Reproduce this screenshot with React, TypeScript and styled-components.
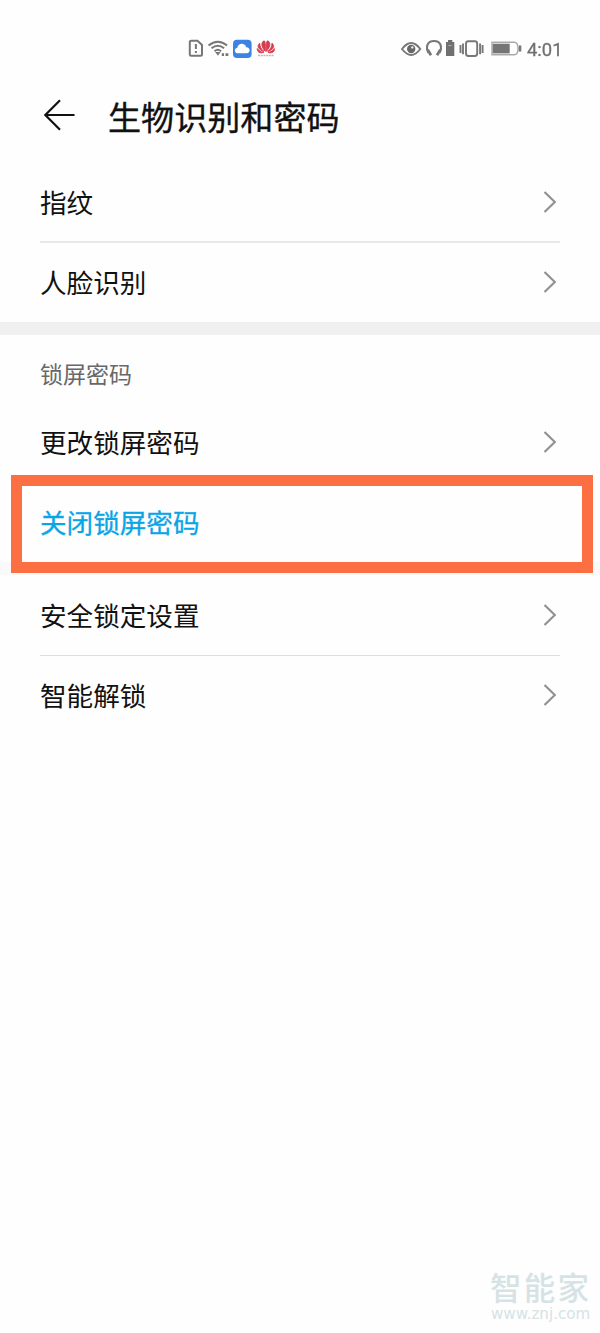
import React from "react";
import styled, { createGlobalStyle } from "styled-components";

const Global = createGlobalStyle`
  body { margin: 0; background: #fefefe; }
  * { box-sizing: border-box; }
`;

const Screen = styled.main`
  position: relative;
  display: flex;
  flex-direction: column;
  width: 600px;
  height: 1333px;
  overflow: hidden;
  background: #fefefe;
  color: #111;
  font-family: "Noto Sans CJK SC", sans-serif;
`;

const StatusBar = styled.div`
  display: flex;
  justify-content: space-between;
  align-items: center;
  height: 30px;
  margin-top: 34px;
  padding: 0 38px 0 187px;
  filter: blur(0.6px);
`;

const StatusGroup = styled.div`
  display: flex;
  align-items: center;
  height: 30px;
`;

const Clock = styled.span`
  width: 35px;
  margin-left: 4px;
  padding-top: 1px;
  font: 18.4px/30px Roboto, sans-serif;
  color: #707070;
  -webkit-text-stroke: 0.3px #707070;
  white-space: nowrap;
`;

const Header = styled.header`
  display: flex;
  align-items: center;
  height: 98px;
  padding: 0 0 0 43px;
`;

const BackIcon = styled.svg`
  width: 32px;
  height: 32px;
  margin-top: 4px;
`;

const Title = styled.h1`
  margin: 5px 0 0 33px;
  font-size: 33.1px;
  line-height: 48px;
  font-weight: 400;
  -webkit-text-stroke: 0.35px #111;
  white-space: nowrap;
`;

const Row = styled.div<{ $accent?: boolean }>`
  display: flex;
  align-items: center;
  justify-content: space-between;
  height: 80px;
  margin: 0 40px;
  padding-right: 2px;
  font-size: 26.6px;
  line-height: 40px;
  font-weight: 400;
  color: ${(p) => (p.$accent ? "#0ba5e6" : "#111")};
  -webkit-text-stroke: ${(p) => (p.$accent ? "0.3px #0ba5e6" : "0")};
`;

const RowLabel = styled.span`
  margin-top: -1px;
`;

const Divider = styled.div<{ $thin?: boolean }>`
  height: ${(p) => (p.$thin ? 1 : 2)}px;
  margin: ${(p) => (p.$thin ? "0 40px -1px" : "-1px 40px")};
  background: ${(p) => (p.$thin ? "#dedede" : "#e8e8e8")};
`;

const Band = styled.div<{ $faint?: boolean }>`
  height: 13px;
  background: ${(p) => (p.$faint ? "#f9f9f9" : "#f0f0f0")};
`;

const SectionLabel = styled.h2`
  height: 67px;
  margin: 0;
  padding: 20px 40px 0;
  font-size: 23px;
  line-height: 36px;
  font-weight: 400;
  color: #686868;
`;

const Highlight = styled.div`
  position: absolute;
  left: 11px;
  top: 475px;
  width: 582px;
  height: 98px;
  border: 11px solid #fb6f42;
`;

const Watermark = styled.footer`
  display: flex;
  flex-direction: column;
  align-items: flex-start;
  margin: auto 0 10px 490px;
  color: #d5e3e5;
`;

const Brand = styled.strong`
  font-size: 31.5px;
  line-height: 40px;
  letter-spacing: 2.2px;
  font-weight: 500;
  white-space: nowrap;
`;

const Site = styled.span`
  padding-left: 1px;
  font: 15.1px/17px "DejaVu Sans", sans-serif;
`;

const Chevron = () => (
  <svg width="16" height="24" viewBox="0 0 16 24" fill="none" stroke="#929292" strokeWidth="2.2">
    <path d="M2.5 2 12.8 12 2.5 22" />
  </svg>
);

const SystemIcons = () => (
  <svg width="90" height="30" viewBox="0 0 90 30" fill="none" stroke="#777" strokeWidth="2">
    <path d="M4.3 6.7h6.2L15 11v9.3q0 1.5-1.5 1.5H4.3q-1.5 0-1.5-1.5V8.2q0-1.5 1.5-1.5Z" />
    <path d="M8.9 10v5M8.9 17v2" strokeWidth="2" />
    <path d="M21.5 11.5q9.3-7.7 18.6 0M24.5 14.3q6.3-5.3 12.6 0M27.5 17.2q3.3-2.7 6.6 0" strokeWidth="1.9" />
    <path d="m28.2 18 2.7 3.7 2.7-3.7Z" fill="#777" stroke="none" />
    <path d="M34.8 20.7h2.2M38.5 20.7h2.8" strokeWidth="2.8" />
    <rect x="46" y="5.7" width="18.6" height="18.2" rx="4" fill="#3d83e5" stroke="none" />
    <path d="M50.4 19.3c-3.3-.5-3.5-5-.1-5.6.8-5.2 8-5.2 9-.4 4.4.1 4.5 6 .2 6Z" fill="#fff" stroke="none" />
    <g fill="#d63c4e" stroke="#d63c4e" strokeWidth=".9">
      <path d="M78.3 17.4c-3.5-4-4.6-7.6-2-10.3 2-.9 2.3 1 2 10.3ZM79.4 17.4c3.5-4 4.6-7.6 2-10.3-2-.9-2.3 1-2 10.3ZM77 17.4c-3-2-4.2-5.1-4.3-8.2-3.2 2.6-1.5 6.6 4.3 8.2ZM80.7 17.4c3-2 4.2-5.1 4.3-8.2 3.2 2.6 1.5 6.6-4.3 8.2ZM76.8 18.3c-3-.2-5-1.8-6.5-3.8-.5 2.9 2 5.4 6.5 3.8ZM80.9 18.3c3-.2 5-1.8 6.5-3.8.5 2.9-2 5.4-6.5 3.8Z" />
    </g>
    <path d="M71 21.5h16" stroke="#c5b5b5" strokeWidth="1.4" strokeDasharray="2 .7" />
  </svg>
);

const DeviceIcons = () => (
  <svg width="123" height="30" viewBox="0 0 123 30" fill="none" stroke="#777" strokeWidth="1.9">
    <path d="M2 15q9.2-12 18.3 0Q11.2 27 2 15Z" />
    <circle cx="11.2" cy="15" r="4.2" fill="#686868" stroke="none" />
    <circle cx="12.3" cy="13.4" r="1.2" fill="#eee" stroke="none" />
    <path d="M28.6 19C25.2 13 27.3 7 34 7s8.8 6 5.4 12" strokeWidth="2.1" />
    <path d="M27.7 15.7 31 21.3M40.3 15.7 37 21.3" strokeWidth="2.7" />
    <path d="M46 8h8.3v14H46ZM48 6h4.3v3H48Z" fill="#707070" stroke="none" />
    <path d="M48.4 11.5h3.4" stroke="#aaa" strokeWidth="1" />
    <rect x="66" y="7.3" width="11.2" height="14.7" rx="2.4" />
    <path d="M63 9.5v10.8M80.1 9.5v10.8M60.5 11v8M82.6 11v8" />
    <path d="M92 8.3h22.2q3.8 0 3.8 6.2t-3.8 6.2H92Z" stroke="#aaa" strokeWidth="1.4" />
    <path d="M92.7 9.7h17v9.7h-17Z" fill="#757575" stroke="none" />
    <path d="M120 11.5v6" strokeWidth="2.6" />
  </svg>
);

const SettingRow = ({ label }: { label: string }) => (
  <Row>
    <RowLabel>{label}</RowLabel>
    <Chevron />
  </Row>
);

export default function App() {
  return (
    <Screen>
      <Global />
      <StatusBar>
        <StatusGroup>
          <SystemIcons />
        </StatusGroup>
        <StatusGroup>
          <DeviceIcons />
          <Clock>4:01</Clock>
        </StatusGroup>
      </StatusBar>
      <Header>
        <BackIcon viewBox="0 0 32 32" fill="none" stroke="#111" strokeWidth="2.2">
          <path d="M31.5 16H2.5M17 1.3 2.3 16 17 30.7" />
        </BackIcon>
        <Title>生物识别和密码</Title>
      </Header>
      <SettingRow label="指纹" />
      <Divider />
      <SettingRow label="人脸识别" />
      <Band />
      <SectionLabel>锁屏密码</SectionLabel>
      <SettingRow label="更改锁屏密码" />
      <Row $accent>
        <RowLabel>关闭锁屏密码</RowLabel>
      </Row>
      <Band $faint />
      <SettingRow label="安全锁定设置" />
      <Divider $thin />
      <SettingRow label="智能解锁" />
      <Highlight />
      <Watermark>
        <Brand>智能家</Brand>
        <Site>www.znj.com</Site>
      </Watermark>
    </Screen>
  );
}
